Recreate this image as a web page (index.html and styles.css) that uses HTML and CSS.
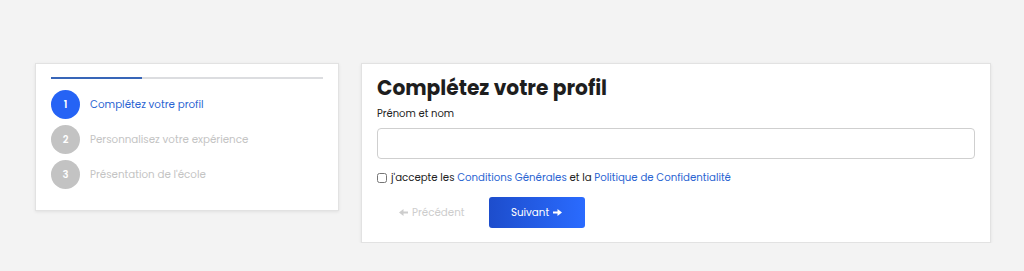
FILE: index.html
```html
<!DOCTYPE html>
<html lang="fr">
<head>
    <meta charset="UTF-8">
    <meta name="viewport" content="width=device-width, initial-scale=1.0">
    <title>Complétez votre profil</title>
    <link rel="stylesheet" href="styles.css">
</head>
<body>
    <div class="page">
        <div class="steps-card">
            <div class="progress">
                <div class="progress-fill"></div>
            </div>
            <div class="step active">
                <span class="step-num">1</span>
                <span class="step-label">Complétez votre profil</span>
            </div>
            <div class="step">
                <span class="step-num">2</span>
                <span class="step-label">Personnalisez votre expérience</span>
            </div>
            <div class="step">
                <span class="step-num">3</span>
                <span class="step-label">Présentation de l'école</span>
            </div>
        </div>

        <div class="form-card">
            <h1>Complétez votre profil</h1>
            <label class="field-label" for="fullname">Prénom et nom</label>
            <input type="text" id="fullname" class="field-input">

            <label class="terms">
                <input type="checkbox">
                <span>j'accepte les <a href="#">Conditions Générales</a> et la <a href="#">Politique de Confidentialité</a></span>
            </label>

            <div class="actions">
                <button class="btn-prev" disabled>
                    <svg class="arrow" viewBox="0 0 10 10"><path d="M10 4H5V1L0 5l5 4V6h5z"/></svg>
                    Précédent
                </button>
                <button class="btn-next">
                    Suivant
                    <svg class="arrow" viewBox="0 0 10 10"><path d="M0 4h5V1l5 4-5 4V6H0z"/></svg>
                </button>
            </div>
        </div>
    </div>
</body>
</html>
```

FILE: styles.css
```css
* {
    margin: 0;
    padding: 0;
    box-sizing: border-box;
}

body {
    font-family: 'Poppins', 'Open Sans', sans-serif;
    background: #f3f3f3;
    color: #222;
}

.page {
    display: flex;
    align-items: flex-start;
    gap: 22px;
    padding: 63px 0 0 35px;
}

.steps-card {
    width: 304px;
    background: white;
    border: 1px solid #e2e2e2;
    box-shadow: 0 1px 3px rgba(0,0,0,0.08);
    padding: 13px 15px 21px;
}

.progress {
    height: 2px;
    background: #dcdde0;
    margin-bottom: 11px;
}

.progress-fill {
    width: 33.3%;
    height: 100%;
    background: #3866b8;
}

.step {
    display: flex;
    align-items: center;
    gap: 10px;
    margin-bottom: 6px;
}

.step:last-child {
    margin-bottom: 0;
}

.step-num {
    width: 29px;
    height: 29px;
    border-radius: 50%;
    background: #c3c3c3;
    color: white;
    font-size: 10px;
    font-weight: 600;
    display: flex;
    align-items: center;
    justify-content: center;
}

.step-label {
    font-size: 10.3px;
    color: #c4c4c4;
}

.step.active .step-num {
    background: #2563f5;
}

.step.active .step-label {
    color: #2a64d2;
}

.form-card {
    width: 630px;
    background: white;
    border: 1px solid #e2e2e2;
    box-shadow: 0 1px 3px rgba(0,0,0,0.08);
    padding: 11px 15px 14px;
}

h1 {
    font-size: 20.2px;
    font-weight: 700;
    color: #1e1e1e;
    line-height: 26px;
}

.field-label {
    display: block;
    font-size: 10px;
    line-height: 15px;
    margin-top: 5px;
    color: #222;
}

.field-input {
    display: block;
    width: 100%;
    height: 31px;
    margin-top: 7px;
    border: 1px solid #cfcfcf;
    border-radius: 4px;
    background: white;
}

.terms {
    display: flex;
    align-items: center;
    gap: 4px;
    margin-top: 11px;
    font-size: 10.2px;
    line-height: 15px;
    color: #222;
}

.terms input {
    width: 10px;
    height: 10px;
}

.terms a {
    color: #2a64d2;
    text-decoration: none;
}

.actions {
    display: flex;
    align-items: center;
    gap: 10px;
    margin-top: 12px;
    padding-left: 8px;
}

.btn-prev,
.btn-next {
    display: flex;
    align-items: center;
    justify-content: center;
    gap: 4px;
    font-family: inherit;
    font-size: 10.3px;
}

.btn-prev {
    background: none;
    border: none;
    color: #cdcdcd;
    padding: 0 14px;
}

.btn-next {
    width: 96px;
    height: 31px;
    border: none;
    border-radius: 3px;
    background: linear-gradient(90deg, #1d4dcc, #2a6bff);
    color: white;
    cursor: pointer;
}

.arrow {
    width: 9px;
    height: 9px;
    fill: currentColor;
}
```
